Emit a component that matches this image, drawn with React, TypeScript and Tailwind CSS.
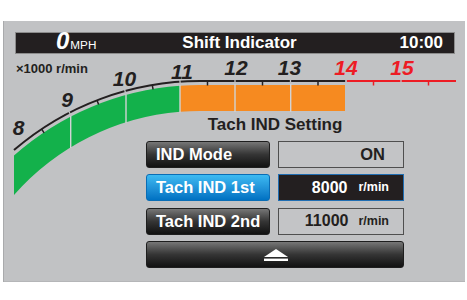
import React from "react";

const CX = 200;
const CY = 366;
const R = 285;
const BG = "#c1c2c4";
const INK = "#231f20";
const RED = "#ed1c24";

function arcY(x: number) {
  if (x >= CX) return 81;
  return CY - Math.sqrt(R * R - (CX - x) * (CX - x));
}
function dirAt(x: number): [number, number] {
  if (x >= CX) return [0, 1];
  const y = arcY(x);
  const dx = CX - x;
  const dy = CY - y;
  const l = Math.sqrt(dx * dx + dy * dy);
  return [dx / l, dy / l];
}

const majors = [14, 69.5, 125, 180, 235, 290.5, 346, 401];
const minors = [41.6, 97, 152.3, 207.5, 262.5, 318, 373.5, 428.5];

const labels: { t: string; x: number; y: number; red?: boolean }[] = [
  { t: "8", x: 18.5, y: 134.5 },
  { t: "9", x: 67, y: 106.5 },
  { t: "10", x: 124.5, y: 85.5 },
  { t: "11", x: 182, y: 78.5 },
  { t: "12", x: 236, y: 75 },
  { t: "13", x: 289.5, y: 75 },
  { t: "14", x: 346, y: 75, red: true },
  { t: "15", x: 402, y: 75, red: true },
];

function Gauge() {
  return (
    <svg
      className="absolute left-0 top-0 pointer-events-none"
      width={462}
      height={261}
      viewBox="3 21 462 261"
    >
      <path
        d="M14,155.4 A281,281 0 0,1 180,85.7 L180,111.8 A248,248 0 0,0 14,195 Z"
        fill="#13b14b"
      />
      <path
        d="M180,85.7 A281,281 0 0,1 200,85 L345,85 L345,111 L200,111 A248,248 0 0,0 180,111.8 Z"
        fill="#f68a20"
      />
      {[
        [70.7, 116, 148],
        [126, 94.5, 123],
        [180, 85, 112.5],
        [235, 84, 112],
        [290.7, 84, 112],
      ].map(([x, a, b], i) => (
        <line key={i} x1={x} y1={a} x2={x} y2={b} stroke="#d2d3d5" strokeWidth={1.4} />
      ))}
      <path
        d={`M14,${arcY(14)} A${R},${R} 0 0,1 200,81 L345.5,81`}
        fill="none"
        stroke={INK}
        strokeWidth={2}
      />
      <path d="M346.5,81 L456,81" fill="none" stroke={RED} strokeWidth={2} />
      {majors.slice(1).map((x, i) => {
        const y = arcY(x);
        const [dx, dy] = dirAt(x);
        return (
          <line
            key={i}
            x1={x - dx * 3}
            y1={y - dy * 3}
            x2={x + dx * 3}
            y2={y + dy * 3}
            stroke={BG}
            strokeWidth={1.3}
          />
        );
      })}
      {minors.map((x, i) => {
        const y = arcY(x);
        const [dx, dy] = dirAt(x);
        return (
          <line
            key={i}
            x1={x}
            y1={y}
            x2={x + dx * 4.5}
            y2={y + dy * 4.5}
            stroke={x > 346 ? RED : INK}
            strokeWidth={1.5}
          />
        );
      })}
      {labels.map((l) => (
        <text
          key={l.t}
          x={l.x}
          y={l.y}
          textAnchor="middle"
          fontFamily="'Liberation Sans', Arial, sans-serif"
          fontWeight="bold"
          fontStyle="italic"
          fontSize={21}
          fill={l.red ? RED : INK}
        >
          {l.t}
        </text>
      ))}
    </svg>
  );
}

function DarkButton({ children, className = "" }: { children: React.ReactNode; className?: string }) {
  return (
    <div
      className={
        "h-[27px] rounded-[3px] border border-[#1e1e1e] bg-linear-to-b from-[#777777] via-[#353535] to-[#121212] text-white " +
        className
      }
    >
      {children}
    </div>
  );
}

export default function App() {
  return (
    <div className="w-[467px] h-[300px] bg-white pt-[21px] pl-[3px] font-['Liberation_Sans',Arial,sans-serif]">
      <div className="relative flex flex-col w-[462px] h-[261px] bg-[#c1c2c4] shadow-[inset_1px_0_0_#a9aaac,inset_0_-1px_0_#b5b6b8]">
        <Gauge />
        <div className="relative mt-[11px] ml-[12px] w-[440px] h-[22px] bg-[#231f20] border border-[#8c8c8c] flex items-center text-white">
          <div className="w-[159px] pl-[40px] flex items-baseline leading-[20px]">
            <span className="text-[24px] font-bold italic">0</span>
            <span className="text-[11.7px] ml-[1px]">MPH</span>
          </div>
          <div className="flex-1 text-center text-[17px] font-bold leading-[20px]">Shift Indicator</div>
          <div className="w-[150px] pr-[11px] text-right text-[17px] font-bold leading-[20px]">10:00</div>
        </div>
        <div className="relative mt-[7px] ml-[13px] h-[15px] leading-[15px] text-[13px] font-bold text-[#231f20]">
          ×1000 r/min
        </div>
        <div className="relative mt-[39px] ml-[143px] w-[258px]">
          <div className="h-[20px] leading-[20px] text-[17px] font-bold text-center text-[#231f20]">
            Tach IND Setting
          </div>
          <div className="mt-[6px] flex flex-col gap-[6.33px]">
            <div className="flex gap-[8px]">
              <DarkButton className="w-[124px] pl-[9px] flex items-center text-[16.5px] font-bold">
                IND Mode
              </DarkButton>
              <div className="w-[126px] h-[27px] border border-[#4f4f4f] bg-[#c3c4c6] flex items-center justify-end pr-[18px] text-[16.5px] font-bold text-[#231f20]">
                ON
              </div>
            </div>
            <div className="flex gap-[8px]">
              <div className="w-[124px] h-[27px] rounded-[3px] border border-[#0a6db5] bg-linear-to-b from-[#3dbaf2] to-[#0071c2] pl-[9px] flex items-center text-[16.5px] font-bold text-white">
                Tach IND 1st
              </div>
              <div className="w-[126px] h-[27px] border border-[#1f6db2] bg-[#231f20] flex items-center justify-end pr-[14px] text-white font-bold">
                <span className="text-[16px]">8000</span>
                <span className="text-[12.5px] ml-[11px]">r/min</span>
              </div>
            </div>
            <div className="flex gap-[8px]">
              <DarkButton className="w-[124px] pl-[9px] flex items-center text-[16.5px] font-bold">
                Tach IND 2nd
              </DarkButton>
              <div className="w-[126px] h-[27px] border border-[#4f4f4f] bg-[#c3c4c6] flex items-center justify-end pr-[14px] text-[#231f20] font-bold">
                <span className="text-[16px]">11000</span>
                <span className="text-[12.5px] ml-[10px]">r/min</span>
              </div>
            </div>
            <DarkButton className="w-[258px] flex items-center justify-center">
              <svg width="24" height="12" viewBox="0 0 24 12" className="ml-[2px] mt-[1px]">
                <polygon points="12,0 24,8 0,8" fill="#ffffff" />
                <rect x="0" y="9.6" width="24" height="2.4" fill="#ffffff" />
              </svg>
            </DarkButton>
          </div>
        </div>
      </div>
    </div>
  );
}
